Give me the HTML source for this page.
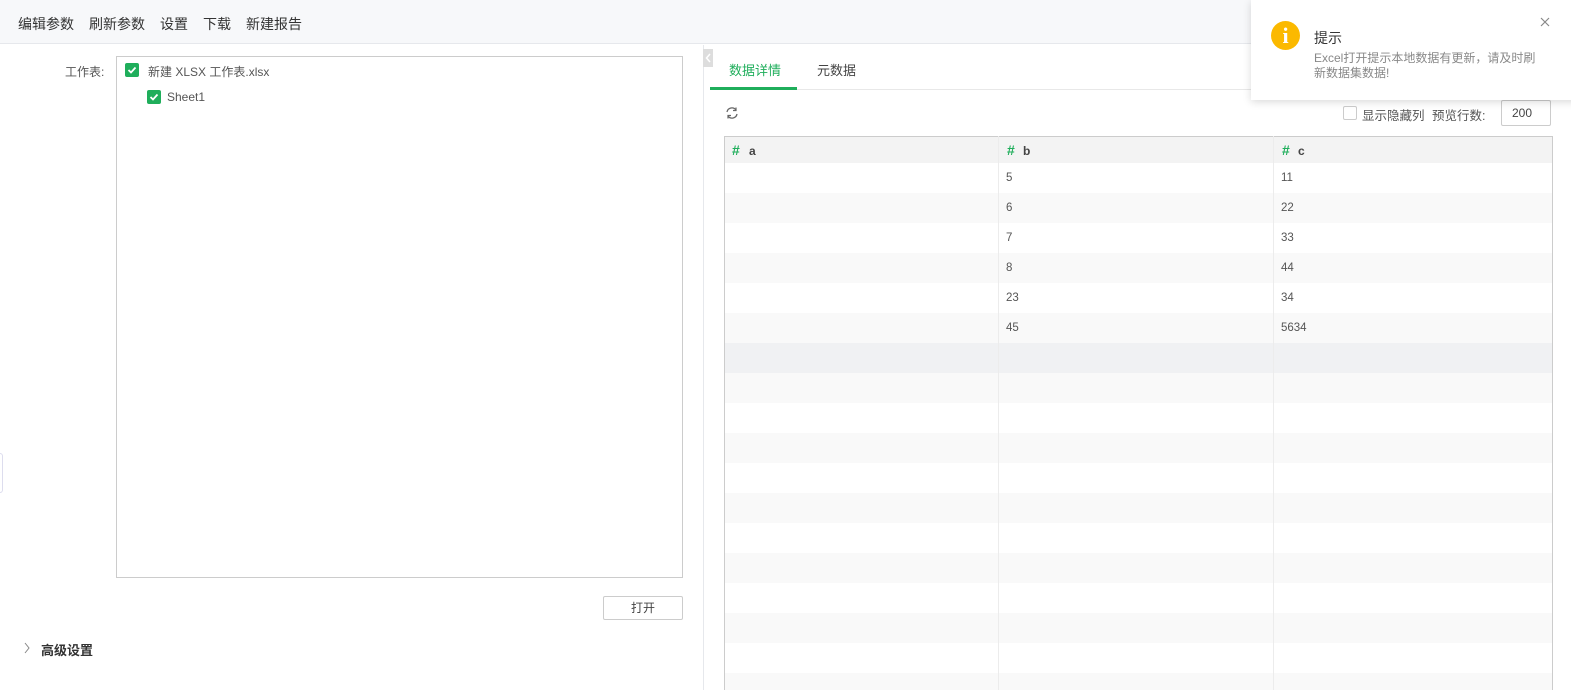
<!DOCTYPE html>
<html><head><meta charset="utf-8"><style>
*{box-sizing:border-box;margin:0;padding:0}
html,body{width:1571px;height:690px;overflow:hidden}
body{background:#fff;font-family:"Liberation Sans","Noto Sans CJK SC",sans-serif;color:#333;font-size:12px;position:relative}
.abs{position:absolute}
.top{left:0;top:0;width:1571px;height:44px;background:#f7f8fa;border-bottom:1px solid #e6e8ec}
.top span{position:absolute;top:14px;font-size:14px;color:#333}
.cb{position:absolute;width:14px;height:14px;background:#1fae5b;border-radius:2px}
.cb svg{position:absolute;left:2px;top:2px}
.row{position:absolute;left:725px;width:827px;height:30px}
.cell{position:absolute;top:9px;font-size:11.5px;color:#555}
.vl{position:absolute;top:136px;width:1px;height:554px;background:#ececec}
</style></head><body>
<div class="abs top">
<span style="left:18px">编辑参数</span><span style="left:89px">刷新参数</span><span style="left:160px">设置</span><span style="left:203px">下载</span><span style="left:246px">新建报告</span>
</div>
<div class="abs" style="left:65px;top:63px;font-size:12px;color:#555">工作表:</div>
<div class="abs" style="left:116px;top:56px;width:567px;height:522px;border:1px solid #ccc"></div>
<div class="cb" style="left:125px;top:63px"><svg width="10" height="10" viewBox="0 0 10 10"><path d="M1.5 5 L4 7.5 L8.5 2.5" stroke="#fff" stroke-width="1.8" fill="none"/></svg></div>
<div class="abs" style="left:148px;top:63px;font-size:12px;color:#555">新建 XLSX 工作表.xlsx</div>
<div class="cb" style="left:147px;top:90px"><svg width="10" height="10" viewBox="0 0 10 10"><path d="M1.5 5 L4 7.5 L8.5 2.5" stroke="#fff" stroke-width="1.8" fill="none"/></svg></div>
<div class="abs" style="left:167px;top:90px;font-size:12px;color:#555">Sheet1</div>
<div class="abs" style="left:603px;top:596px;width:80px;height:24px;border:1px solid #ccc;border-radius:2px;text-align:center;line-height:22px;font-size:12px;color:#444">打开</div>
<svg class="abs" style="left:23px;top:642px" width="8" height="12"><path d="M2 1 L6 6 L2 11" stroke="#888" stroke-width="1" fill="none"/></svg>
<div class="abs" style="left:41px;top:640px;font-size:13px;color:#333;font-weight:bold">高级设置</div>
<div class="abs" style="left:0;top:453px;width:3px;height:40px;border:1px solid #dde;border-left:none;border-radius:0 3px 3px 0"></div>
<div class="abs" style="left:703px;top:45px;width:1px;height:645px;background:#e6e8ec"></div>
<div class="abs" style="left:703px;top:49px;width:10px;height:18px;background:#ddd"><svg width="10" height="18"><path d="M7 5 L3.5 9 L7 13" stroke="#fff" stroke-width="1.5" fill="none"/></svg></div>
<div class="abs" style="left:729px;top:60px;font-size:13px;color:#1fae5b">数据详情</div>
<div class="abs" style="left:817px;top:60px;font-size:13px;color:#444">元数据</div>
<div class="abs" style="left:710px;top:89px;width:861px;height:1px;background:#e8e8e8"></div>
<div class="abs" style="left:710px;top:87px;width:87px;height:3px;background:#1fae5b"></div>
<svg class="abs" style="left:725px;top:106px" width="14" height="14" viewBox="0 0 14 14"><path d="M2 6 A5 5 0 0 1 11 4 M12 8 A5 5 0 0 1 3 10" stroke="#666" stroke-width="1.3" fill="none"/><path d="M11 1.5 V4.5 H8" stroke="#666" stroke-width="1.2" fill="none"/><path d="M3 12.5 V9.5 H6" stroke="#666" stroke-width="1.2" fill="none"/></svg>
<div class="abs" style="left:1343px;top:106px;width:14px;height:14px;border:1px solid #ccc;border-radius:2px"></div>
<div class="abs" style="left:1362px;top:105px;font-size:12.5px;color:#555">显示隐藏列</div>
<div class="abs" style="left:1432px;top:105px;font-size:12.5px;color:#555">预览行数:</div>
<div class="abs" style="left:1501px;top:100px;width:50px;height:26px;border:1px solid #ccc;border-radius:2px;line-height:24px;padding-left:10px;font-size:12px;color:#444">200</div>
<div class="abs" style="left:724px;top:136px;width:829px;height:560px;border:1px solid #ccc;border-bottom:none"></div>
<div class="abs" style="left:725px;top:137px;width:827px;height:26px;background:#f3f3f3"></div>
<div class="abs" style="left:732px;top:142px;font-size:14px;color:#1fae5b;font-weight:bold">#</div><div class="abs" style="left:749px;top:144px;font-size:12px;font-weight:bold;color:#444">a</div>
<div class="abs" style="left:1007px;top:142px;font-size:14px;color:#1fae5b;font-weight:bold">#</div><div class="abs" style="left:1023px;top:144px;font-size:12px;font-weight:bold;color:#444">b</div>
<div class="abs" style="left:1282px;top:142px;font-size:14px;color:#1fae5b;font-weight:bold">#</div><div class="abs" style="left:1298px;top:144px;font-size:12px;font-weight:bold;color:#444">c</div>
<div class="row" style="top:163px"><span class="cell" style="left:281px">5</span><span class="cell" style="left:556px">11</span></div>
<div class="row" style="top:193px;background:#f9f9f9"><span class="cell" style="left:281px">6</span><span class="cell" style="left:556px">22</span></div>
<div class="row" style="top:223px"><span class="cell" style="left:281px">7</span><span class="cell" style="left:556px">33</span></div>
<div class="row" style="top:253px;background:#f9f9f9"><span class="cell" style="left:281px">8</span><span class="cell" style="left:556px">44</span></div>
<div class="row" style="top:283px"><span class="cell" style="left:281px">23</span><span class="cell" style="left:556px">34</span></div>
<div class="row" style="top:313px;background:#f9f9f9"><span class="cell" style="left:281px">45</span><span class="cell" style="left:556px">5634</span></div>
<div class="row" style="top:343px;background:#f0f1f3"></div>
<div class="row" style="top:373px;background:#f9f9f9"></div>
<div class="row" style="top:433px;background:#f9f9f9"></div>
<div class="row" style="top:493px;background:#f9f9f9"></div>
<div class="row" style="top:553px;background:#f9f9f9"></div>
<div class="row" style="top:613px;background:#f9f9f9"></div>
<div class="row" style="top:673px;background:#f9f9f9"></div>
<div class="vl" style="left:998px"></div><div class="vl" style="left:1273px"></div>
<div class="abs" style="left:1251px;top:0;width:330px;height:100px;background:#fff;box-shadow:0 2px 8px rgba(0,0,0,0.15)"></div>
<div class="abs" style="left:1271px;top:21px;width:29px;height:29px;border-radius:50%;background:#fbb900;color:#fff;text-align:center;font-family:'Liberation Serif',serif;font-size:22px;line-height:29px;font-weight:bold">i</div>
<div class="abs" style="left:1314px;top:28px;font-size:14px;color:#333">提示</div>
<div class="abs" style="left:1314px;top:51px;width:230px;font-size:12px;line-height:15px;color:#888">Excel打开提示本地数据有更新，请及时刷新数据集数据!</div>
<svg class="abs" style="left:1540px;top:17px" width="10" height="10"><path d="M1 1 L9 9 M9 1 L1 9" stroke="#888" stroke-width="1.2"/></svg>
</body></html>
